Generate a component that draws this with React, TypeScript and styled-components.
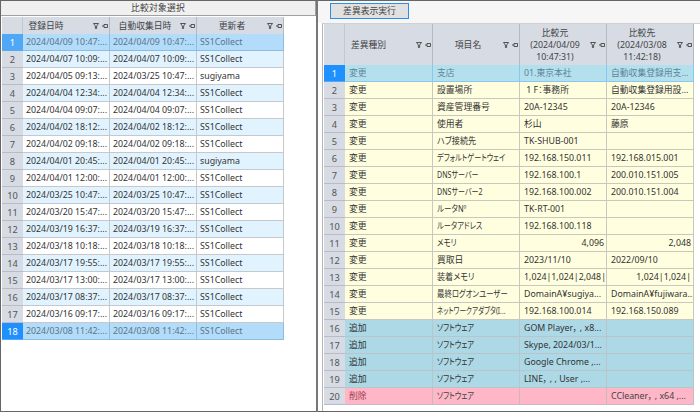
import * as React from 'react';
import styled, { createGlobalStyle } from 'styled-components';

const GlobalStyle = createGlobalStyle`
  html, body {
    margin: 0;
    padding: 0;
    background: #ffffff;
  }
  body {
    font-family: "Noto Sans", "Noto Sans CJK JP", sans-serif;
    font-size: 9px;
    font-feature-settings: "palt";
    color: #333;
  }
`;

const Page = styled.div`
  width: 700px;
  height: 412px;
  display: flex;
  overflow: hidden;
  box-sizing: border-box;
  background: #fff;
`;

const LeftPane = styled.section`
  width: 318px;
  height: 412px;
  flex: none;
  box-sizing: border-box;
  border: 1px solid #666;
  border-right: 2px solid #777;
  background: #fff;
`;

const RightPane = styled.section`
  flex: 1;
  height: 412px;
  box-sizing: border-box;
  border-top: 1px solid #666;
  border-bottom: 1px solid #666;
  background: #fff;
  display: flex;
  flex-direction: column;
`;

const TitleBar = styled.div`
  height: 15px;
  line-height: 14px;
  text-align: center;
  background: #f0f0f0;
  border-bottom: 1px solid #a0a0a0;
  border-right: 1px solid #a0a0a0;
  box-sizing: border-box;
  font-size: 8.8px;
  letter-spacing: 0.2px;
  color: #444;
`;

const ButtonBar = styled.div`
  height: 22px;
  flex: none;
  padding: 2px 0 0 12px;
  box-sizing: border-box;
  background: #f6f6f6;
`;

const RunButton = styled.button`
  display: block;
  width: 79px;
  height: 16px;
  padding: 0;
  border: 1px solid #2b8fe8;
  background: #e1e1e1;
  font-family: inherit;
  font-feature-settings: "palt";
  font-size: 8.8px;
  line-height: 13px;
  color: #444;
`;

const GridArea = styled.div`
  flex: 1;
  margin-left: 4px;
  border-left: 1px solid #b4b4b4;
  border-top: 1px solid #d0d0d0;
`;

const Grid = styled.div<{ $top: number }>`
  margin: ${p => p.$top}px 0 0 1px;
  display: flex;
  flex-direction: column;
`;

const Row = styled.div`
  display: flex;
`;

const HeaderRow = styled(Row)<{ $height: number }>`
  height: ${p => p.$height}px;
`;

const DataRow = styled(Row)`
  height: 17px;
`;

const Corner = styled.div`
  width: 21px;
  flex: none;
  background: #d6dbe4;
  border-right: 1px solid #c4c8d0;
  box-sizing: border-box;
`;

const HeaderCell = styled.div<{ $width: number; $first?: boolean }>`
  width: ${p => p.$width}px;
  flex: none;
  box-sizing: border-box;
  background: #d6dbe4;
  border-right: 1px solid #b4b8c2;
  position: relative;
  display: flex;
  align-items: center;
  justify-content: center;
  padding-right: ${p => (p.$first ? 40 : 16)}px;
  text-align: center;
  font-size: 8.8px;
  line-height: 12px;
  color: #444;
`;

const HeaderIcons = styled.span`
  position: absolute;
  right: 1px;
  top: 50%;
  transform: translateY(-50%);
  display: flex;
  gap: 3px;
  align-items: center;
`;

const RowHead = styled.div<{ $tone?: 'active' | 'soft' }>`
  width: 21px;
  flex: none;
  box-sizing: border-box;
  background: ${p => (p.$tone === 'active' ? '#1e90ff' : p.$tone === 'soft' ? '#4ea8f6' : '#d6dbe4')};
  color: ${p => (p.$tone ? '#fff' : '#555')};
  border-bottom: 1px solid ${p => (p.$tone ? '#5aa8f0' : '#b9bcc4')};
  text-align: center;
  line-height: 17px;
  font-size: 9.2px;
`;

const Cell = styled.div<{ $width: number; $bg: string; $fg: string; $line: string; $right?: boolean; $pad: number }>`
  width: ${p => p.$width}px;
  flex: none;
  box-sizing: border-box;
  background: ${p => p.$bg};
  color: ${p => p.$fg};
  border-right: 1px solid ${p => p.$line};
  border-bottom: 1px solid ${p => p.$line};
  padding: 0 2px 0 ${p => p.$pad}px;
  line-height: 17px;
  font-size: 8.8px;
  white-space: pre;
  overflow: hidden;
  text-align: ${p => (p.$right ? 'right' : 'left')};
`;

// katakana in the original font is far narrower than in Noto
const Narrow = styled.span<{ $scale: number }>`
  display: inline-block;
  width: 0;
  transform: scaleX(${p => p.$scale});
  transform-origin: left center;
`;

const FilterPin = () => (
  <HeaderIcons>
    <svg width="6" height="6" viewBox="0 0 6 6">
      <path d="M0.5 0.5H5.5L3.6 3V5.5H2.4V3Z" fill="none" stroke="#444" strokeWidth="0.9" />
    </svg>
    <svg width="6" height="6" viewBox="0 0 6 6">
      <path d="M0 3H2M2 1.5H5.5V4.5H2Z" fill="none" stroke="#444" strokeWidth="0.9" />
    </svg>
  </HeaderIcons>
);

const leftRows: [string, string, string][] = [
  ['2024/04/09 10:47:...', '2024/04/09 10:47:...', 'SS1Collect'],
  ['2024/04/07 10:09:...', '2024/04/07 10:09:...', 'SS1Collect'],
  ['2024/04/05 09:13:...', '2024/03/25 10:47:...', 'sugiyama'],
  ['2024/04/04 12:34:...', '2024/04/04 12:34:...', 'SS1Collect'],
  ['2024/04/04 09:07:...', '2024/04/04 09:07:...', 'SS1Collect'],
  ['2024/04/02 18:12:...', '2024/04/02 18:12:...', 'SS1Collect'],
  ['2024/04/02 09:18:...', '2024/04/02 09:18:...', 'SS1Collect'],
  ['2024/04/01 20:45:...', '2024/04/01 20:45:...', 'sugiyama'],
  ['2024/04/01 12:00:...', '2024/04/01 12:00:...', 'SS1Collect'],
  ['2024/03/25 10:47:...', '2024/03/25 10:47:...', 'SS1Collect'],
  ['2024/03/20 15:47:...', '2024/03/20 15:47:...', 'SS1Collect'],
  ['2024/03/19 16:37:...', '2024/03/19 16:37:...', 'SS1Collect'],
  ['2024/03/18 10:18:...', '2024/03/18 10:18:...', 'SS1Collect'],
  ['2024/03/17 19:55:...', '2024/03/17 19:55:...', 'SS1Collect'],
  ['2024/03/17 13:00:...', '2024/03/17 13:00:...', 'SS1Collect'],
  ['2024/03/17 08:37:...', '2024/03/17 08:37:...', 'SS1Collect'],
  ['2024/03/16 09:17:...', '2024/03/16 09:17:...', 'SS1Collect'],
  ['2024/03/08 11:42:...', '2024/03/08 11:42:...', 'SS1Collect'],
];

type Diff = { kind: string; name: string; from: string; to: string; right?: boolean; narrow?: number };

const rightRows: Diff[] = [
  { kind: '変更', name: '支店', from: '01.東京本社', to: '自動収集登録用支...' },
  { kind: '変更', name: '設置場所', from: ' 1 F：事務所', to: '自動収集登録用設...' },
  { kind: '変更', name: '資産管理番号', from: '20A-12345', to: '20A-12346' },
  { kind: '変更', name: '使用者', from: '杉山', to: '藤原' },
  { kind: '変更', name: 'ハブ接続先', from: 'TK-SHUB-001', to: '', narrow: 0.92 },
  { kind: '変更', name: 'デフォルトゲートウェイ', from: '192.168.150.011', to: '192.168.015.001', narrow: 0.81 },
  { kind: '変更', name: 'DNSサーバー', from: '192.168.100.1', to: '200.010.151.005', narrow: 0.8 },
  { kind: '変更', name: 'DNSサーバー2', from: '192.168.100.002', to: '200.010.151.004', narrow: 0.8 },
  { kind: '変更', name: 'ルータNº', from: 'TK-RT-001', to: '', narrow: 0.85 },
  { kind: '変更', name: 'ルータアドレス', from: '192.168.100.118', to: '', narrow: 0.82 },
  { kind: '変更', name: 'メモリ', from: '4,096', to: '2,048', right: true, narrow: 0.85 },
  { kind: '変更', name: '買取日', from: '2023/11/10', to: '2022/09/10' },
  { kind: '変更', name: '装着メモリ', from: '1,024|1,024|2,048|', to: '1,024|1,024|', right: true, narrow: 0.92 },
  { kind: '変更', name: '最終ログオンユーザー', from: 'DomainA¥sugiya...', to: 'DomainA¥fujiwara...', narrow: 0.84 },
  { kind: '変更', name: 'ネットワークアダプタ(I...', from: '192.168.100.014', to: '192.168.150.089', narrow: 0.75 },
  { kind: '追加', name: 'ソフトウェア', from: 'GOM Player， , x8...', to: '', narrow: 0.83 },
  { kind: '追加', name: 'ソフトウェア', from: 'Skype, 2024/03/1...', to: '', narrow: 0.83 },
  { kind: '追加', name: 'ソフトウェア', from: 'Google Chrome ,...', to: '', narrow: 0.83 },
  { kind: '追加', name: 'ソフトウェア', from: 'LINE， , , User ,...', to: '', narrow: 0.83 },
  { kind: '削除', name: 'ソフトウェア', from: '', to: 'CCleaner， , x64 ,...', narrow: 0.83 },
];

const leftColours = (i: number) => {
  if (i === 0 || i === 17) return { bg: '#b2dcfa', fg: '#5b7488', line: '#8dbcdc' };
  return i % 2 === 1
    ? { bg: '#e1f3ff', fg: '#333', line: '#c2c9d0' }
    : { bg: '#ffffff', fg: '#333', line: '#c8c8c8' };
};

const rightColours = (row: Diff, i: number) => {
  if (i === 0) return { bg: '#b4e0ee', fg: '#5b8598', line: '#88c8f0' };
  if (row.kind === '追加') return { bg: '#add8e6', fg: '#333', line: '#bbc4ca' };
  if (row.kind === '削除') return { bg: '#ffb6c6', fg: '#444', line: '#c8b8c0' };
  return { bg: '#ffffe0', fg: '#333', line: '#c8c8c0' };
};

const LEFT_COLS = [87, 87, 87];
const RIGHT_COLS = [88, 87, 87, 87];

const App: React.FC = () => {
  return (
    <Page>
      <GlobalStyle />
      <LeftPane>
        <TitleBar>比較対象選択</TitleBar>
        <Grid $top={1}>
          <HeaderRow $height={17}>
            <Corner />
            {['登録日時', '自動収集日時', '更新者'].map((h, i) => (
              <HeaderCell key={h} $width={LEFT_COLS[i]} $first={i === 0}>
                {h}
                <FilterPin />
              </HeaderCell>
            ))}
          </HeaderRow>
          {leftRows.map((row, i) => {
            const c = leftColours(i);
            return (
              <DataRow key={i}>
                <RowHead $tone={i === 17 ? 'active' : i === 0 ? 'soft' : undefined}>{i + 1}</RowHead>
                {row.map((v, j) => (
                  <Cell key={j} $width={LEFT_COLS[j]} $bg={c.bg} $fg={c.fg} $line={c.line} $pad={3}>
                    {v}
                  </Cell>
                ))}
              </DataRow>
            );
          })}
        </Grid>
      </LeftPane>
      <RightPane>
        <ButtonBar>
          <RunButton>差異表示実行</RunButton>
        </ButtonBar>
        <GridArea>
          <Grid $top={0}>
            <HeaderRow $height={41}>
              <Corner />
              <HeaderCell $width={RIGHT_COLS[0]} $first>
                差異種別
                <FilterPin />
              </HeaderCell>
              <HeaderCell $width={RIGHT_COLS[1]}>
                項目名
                <FilterPin />
              </HeaderCell>
              <HeaderCell $width={RIGHT_COLS[2]}>
                比較元
                <br />
                (2024/04/09
                <br />
                10:47:31)
                <FilterPin />
              </HeaderCell>
              <HeaderCell $width={RIGHT_COLS[3]}>
                比較先
                <br />
                (2024/03/08
                <br />
                11:42:18)
                <FilterPin />
              </HeaderCell>
            </HeaderRow>
            {rightRows.map((row, i) => {
              const c = rightColours(row, i);
              return (
                <DataRow key={i}>
                  <RowHead $tone={i === 0 ? 'active' : undefined}>{i + 1}</RowHead>
                  <Cell $width={RIGHT_COLS[0]} $bg={c.bg} $fg={row.kind === '削除' ? '#a04050' : c.fg} $line={c.line} $pad={4}>
                    {row.kind}
                  </Cell>
                  <Cell $width={RIGHT_COLS[1]} $bg={c.bg} $fg={c.fg} $line={c.line} $pad={4}>
                    {row.narrow ? <Narrow $scale={row.narrow}>{row.name}</Narrow> : row.name}
                  </Cell>
                  <Cell $width={RIGHT_COLS[2]} $bg={c.bg} $fg={c.fg} $line={c.line} $pad={4} $right={row.right}>
                    {row.from}
                  </Cell>
                  <Cell $width={RIGHT_COLS[3]} $bg={c.bg} $fg={c.fg} $line={c.line} $pad={4} $right={row.right}>
                    {row.to}
                  </Cell>
                </DataRow>
              );
            })}
          </Grid>
        </GridArea>
      </RightPane>
    </Page>
  );
};

export default App;
